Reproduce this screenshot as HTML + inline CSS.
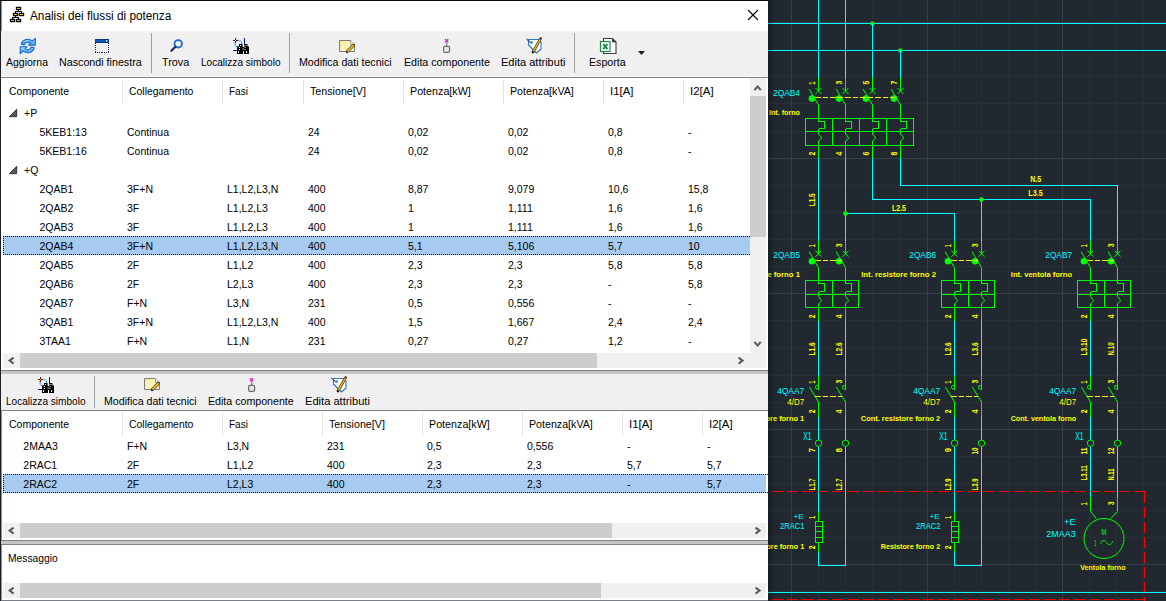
<!DOCTYPE html><html><head><meta charset="utf-8"><style>
html,body{margin:0;padding:0;}body{width:1166px;height:601px;overflow:hidden;position:relative;background:#212830;font-family:"Liberation Sans", sans-serif;}
.a{position:absolute;}
</style></head><body>
<svg class="a" style="left:0;top:0" width="1166" height="601" viewBox="0 0 1166 601" font-family="Liberation Sans, sans-serif"><rect x="818" y="0" width="1" height="601" fill="#282f38"/><rect x="845" y="0" width="1" height="601" fill="#282f38"/><rect x="872" y="0" width="1" height="601" fill="#282f38"/><rect x="900" y="0" width="1" height="601" fill="#282f38"/><rect x="954" y="0" width="1" height="601" fill="#282f38"/><rect x="981" y="0" width="1" height="601" fill="#282f38"/><rect x="1008" y="0" width="1" height="601" fill="#282f38"/><rect x="1035" y="0" width="1" height="601" fill="#282f38"/><rect x="1089" y="0" width="1" height="601" fill="#282f38"/><rect x="1116" y="0" width="1" height="601" fill="#282f38"/><rect x="1143" y="0" width="1" height="601" fill="#282f38"/><rect x="767" y="49" width="399" height="1" fill="#282f38"/><rect x="767" y="76" width="399" height="1" fill="#282f38"/><rect x="767" y="103" width="399" height="1" fill="#282f38"/><rect x="767" y="131" width="399" height="1" fill="#282f38"/><rect x="767" y="185" width="399" height="1" fill="#282f38"/><rect x="767" y="212" width="399" height="1" fill="#282f38"/><rect x="767" y="239" width="399" height="1" fill="#282f38"/><rect x="767" y="266" width="399" height="1" fill="#282f38"/><rect x="767" y="320" width="399" height="1" fill="#282f38"/><rect x="767" y="347" width="399" height="1" fill="#282f38"/><rect x="767" y="375" width="399" height="1" fill="#282f38"/><rect x="767" y="402" width="399" height="1" fill="#282f38"/><rect x="767" y="456" width="399" height="1" fill="#282f38"/><rect x="767" y="483" width="399" height="1" fill="#282f38"/><rect x="767" y="510" width="399" height="1" fill="#282f38"/><rect x="767" y="537" width="399" height="1" fill="#282f38"/><rect x="767" y="591" width="399" height="1" fill="#282f38"/><rect x="791" y="0" width="1" height="601" fill="#363d47"/><rect x="927" y="0" width="1" height="601" fill="#363d47"/><rect x="1062" y="0" width="1" height="601" fill="#363d47"/><rect x="767" y="22" width="399" height="1" fill="#363d47"/><rect x="767" y="158" width="399" height="1" fill="#363d47"/><rect x="767" y="293" width="399" height="1" fill="#363d47"/><rect x="767" y="429" width="399" height="1" fill="#363d47"/><rect x="767" y="564" width="399" height="1" fill="#363d47"/><rect x="767" y="23" width="399" height="1" fill="#00ffff" shape-rendering="crispEdges"/><rect x="767" y="50" width="399" height="1" fill="#00ffff" shape-rendering="crispEdges"/><rect x="870.6" y="21.6" width="3.8" height="3.8" fill="#00ff00"/><rect x="898.6" y="48.6" width="3.8" height="3.8" fill="#00ff00"/><rect x="818" y="0" width="1" height="78" fill="#00ffff" shape-rendering="crispEdges"/><rect x="845" y="0" width="1" height="78" fill="#00ffff" shape-rendering="crispEdges"/><rect x="872" y="23.5" width="1" height="54.5" fill="#00ffff" shape-rendering="crispEdges"/><rect x="900" y="50.5" width="1" height="27.5" fill="#00ffff" shape-rendering="crispEdges"/><rect x="818" y="78" width="1" height="13" fill="#00ff00" shape-rendering="crispEdges"/><line x1="815.5" y1="88" x2="821.5" y2="94" stroke="#00ff00" stroke-width="1" /><line x1="815.5" y1="94" x2="821.5" y2="88" stroke="#00ff00" stroke-width="1" /><line x1="809.0" y1="89" x2="818.5" y2="105" stroke="#00ff00" stroke-width="1" /><circle cx="812.0" cy="98.6" r="3.3" fill="#00ff00"/><rect x="818" y="105" width="1" height="16.5" fill="#00ff00" shape-rendering="crispEdges"/><polyline points="818.5,121.5 824.5,121.5 824.5,128.5 818.5,128.5" stroke="#00ff00" stroke-width="1" fill="none" shape-rendering="crispEdges"/><rect x="818" y="128.5" width="1" height="5.199999999999989" fill="#00ff00" shape-rendering="crispEdges"/><polyline points="818.5,133.7 821.7,138 818.5,141.3" stroke="#00ff00" stroke-width="1" fill="none" /><rect x="818" y="141.3" width="1" height="17.0" fill="#00ff00" shape-rendering="crispEdges"/><text x="0" y="0" transform="translate(814.9,84.6) rotate(-90)" fill="#ffff00" font-size="8.78" text-anchor="start" textLength="2.8" lengthAdjust="spacingAndGlyphs" font-weight="bold">1</text><text x="0" y="0" transform="translate(814.9,155.6) rotate(-90)" fill="#ffff00" font-size="8.78" text-anchor="start" textLength="3.8" lengthAdjust="spacingAndGlyphs" font-weight="bold">2</text><rect x="845" y="78" width="1" height="13" fill="#00ff00" shape-rendering="crispEdges"/><line x1="842.5" y1="88" x2="848.5" y2="94" stroke="#00ff00" stroke-width="1" /><line x1="842.5" y1="94" x2="848.5" y2="88" stroke="#00ff00" stroke-width="1" /><line x1="836.0" y1="89" x2="845.5" y2="105" stroke="#00ff00" stroke-width="1" /><circle cx="839.0" cy="98.6" r="3.3" fill="#00ff00"/><rect x="845" y="105" width="1" height="16.5" fill="#00ff00" shape-rendering="crispEdges"/><polyline points="845.5,121.5 851.5,121.5 851.5,128.5 845.5,128.5" stroke="#00ff00" stroke-width="1" fill="none" shape-rendering="crispEdges"/><rect x="845" y="128.5" width="1" height="5.199999999999989" fill="#00ff00" shape-rendering="crispEdges"/><polyline points="845.5,133.7 848.7,138 845.5,141.3" stroke="#00ff00" stroke-width="1" fill="none" /><rect x="845" y="141.3" width="1" height="17.0" fill="#00ff00" shape-rendering="crispEdges"/><text x="0" y="0" transform="translate(841.9,84.6) rotate(-90)" fill="#ffff00" font-size="8.78" text-anchor="start" textLength="3.8" lengthAdjust="spacingAndGlyphs" font-weight="bold">3</text><text x="0" y="0" transform="translate(841.9,155.6) rotate(-90)" fill="#ffff00" font-size="8.78" text-anchor="start" textLength="3.8" lengthAdjust="spacingAndGlyphs" font-weight="bold">4</text><rect x="872" y="78" width="1" height="13" fill="#00ff00" shape-rendering="crispEdges"/><line x1="869.5" y1="88" x2="875.5" y2="94" stroke="#00ff00" stroke-width="1" /><line x1="869.5" y1="94" x2="875.5" y2="88" stroke="#00ff00" stroke-width="1" /><line x1="863.0" y1="89" x2="872.5" y2="105" stroke="#00ff00" stroke-width="1" /><circle cx="866.0" cy="98.6" r="3.3" fill="#00ff00"/><rect x="872" y="105" width="1" height="16.5" fill="#00ff00" shape-rendering="crispEdges"/><polyline points="872.5,121.5 878.5,121.5 878.5,128.5 872.5,128.5" stroke="#00ff00" stroke-width="1" fill="none" shape-rendering="crispEdges"/><rect x="872" y="128.5" width="1" height="5.199999999999989" fill="#00ff00" shape-rendering="crispEdges"/><polyline points="872.5,133.7 875.7,138 872.5,141.3" stroke="#00ff00" stroke-width="1" fill="none" /><rect x="872" y="141.3" width="1" height="17.0" fill="#00ff00" shape-rendering="crispEdges"/><text x="0" y="0" transform="translate(868.9,84.6) rotate(-90)" fill="#ffff00" font-size="8.78" text-anchor="start" textLength="3.8" lengthAdjust="spacingAndGlyphs" font-weight="bold">5</text><text x="0" y="0" transform="translate(868.9,155.6) rotate(-90)" fill="#ffff00" font-size="8.78" text-anchor="start" textLength="3.8" lengthAdjust="spacingAndGlyphs" font-weight="bold">6</text><rect x="900" y="78" width="1" height="13" fill="#00ff00" shape-rendering="crispEdges"/><line x1="897.5" y1="88" x2="903.5" y2="94" stroke="#00ff00" stroke-width="1" /><line x1="897.5" y1="94" x2="903.5" y2="88" stroke="#00ff00" stroke-width="1" /><line x1="891.0" y1="89" x2="900.5" y2="105" stroke="#00ff00" stroke-width="1" /><circle cx="894.0" cy="98.6" r="3.3" fill="#00ff00"/><rect x="900" y="105" width="1" height="16.5" fill="#00ff00" shape-rendering="crispEdges"/><polyline points="900.5,121.5 906.5,121.5 906.5,128.5 900.5,128.5" stroke="#00ff00" stroke-width="1" fill="none" shape-rendering="crispEdges"/><rect x="900" y="128.5" width="1" height="5.199999999999989" fill="#00ff00" shape-rendering="crispEdges"/><polyline points="900.5,133.7 903.7,138 900.5,141.3" stroke="#00ff00" stroke-width="1" fill="none" /><rect x="900" y="141.3" width="1" height="17.0" fill="#00ff00" shape-rendering="crispEdges"/><text x="0" y="0" transform="translate(896.9,84.6) rotate(-90)" fill="#ffff00" font-size="8.78" text-anchor="start" textLength="3.8" lengthAdjust="spacingAndGlyphs" font-weight="bold">7</text><text x="0" y="0" transform="translate(896.9,155.6) rotate(-90)" fill="#ffff00" font-size="8.78" text-anchor="start" textLength="3.8" lengthAdjust="spacingAndGlyphs" font-weight="bold">8</text><line x1="815.0" y1="97.5" x2="897.0" y2="97.5" stroke="#ffff00" stroke-width="1" stroke-dasharray="5.5,2" shape-rendering="crispEdges"/><rect x="805.5" y="118.5" width="108.0" height="27.0" fill="none" stroke="#00ff00" stroke-width="1" shape-rendering="crispEdges"/><rect x="805.5" y="131" width="108.0" height="1" fill="#00ff00" shape-rendering="crispEdges"/><rect x="832" y="118.5" width="1" height="27.0" fill="#00ff00" shape-rendering="crispEdges"/><rect x="859" y="118.5" width="1" height="27.0" fill="#00ff00" shape-rendering="crispEdges"/><rect x="886" y="118.5" width="1" height="27.0" fill="#00ff00" shape-rendering="crispEdges"/><text x="0" y="0" transform="translate(800,95.5)" fill="#00ffff" font-size="9.60" text-anchor="end" textLength="27" lengthAdjust="spacingAndGlyphs">2QAB4</text><text x="0" y="0" transform="translate(800,114.5)" fill="#ffff00" font-size="7.13" text-anchor="end" textLength="31" lengthAdjust="spacingAndGlyphs" font-weight="bold">Int. forno</text><rect x="818" y="158.3" width="1" height="82.39999999999998" fill="#00ffff" shape-rendering="crispEdges"/><rect x="845" y="158.3" width="1" height="82.39999999999998" fill="#00ffff" shape-rendering="crispEdges"/><polyline points="872.5,158.3 872.5,199.5 1090.5,199.5 1090.5,240.7" stroke="#00ffff" stroke-width="1" fill="none" shape-rendering="crispEdges"/><polyline points="900.5,158.3 900.5,185.5 1117.5,185.5 1117.5,240.7" stroke="#00ffff" stroke-width="1" fill="none" shape-rendering="crispEdges"/><polyline points="845.5,213.5 954.5,213.5 954.5,240.7" stroke="#00ffff" stroke-width="1" fill="none" shape-rendering="crispEdges"/><rect x="981" y="199.5" width="1" height="41.19999999999999" fill="#00ffff" shape-rendering="crispEdges"/><circle cx="845.5" cy="213.5" r="2.3" fill="#00ff00"/><circle cx="981.5" cy="199.5" r="2.3" fill="#00ff00"/><text x="0" y="0" transform="translate(815,206.3) rotate(-90)" fill="#ffff00" font-size="8.92" text-anchor="start" textLength="13" lengthAdjust="spacingAndGlyphs" font-weight="bold">L1.5</text><text x="0" y="0" transform="translate(892,210.5)" fill="#ffff00" font-size="8.64" text-anchor="start" textLength="14" lengthAdjust="spacingAndGlyphs" font-weight="bold">L2.5</text><text x="0" y="0" transform="translate(1030.3,182.3)" fill="#ffff00" font-size="8.64" text-anchor="start" textLength="11" lengthAdjust="spacingAndGlyphs" font-weight="bold">N.5</text><text x="0" y="0" transform="translate(1028.3,196.3)" fill="#ffff00" font-size="8.92" text-anchor="start" textLength="14.4" lengthAdjust="spacingAndGlyphs" font-weight="bold">L3.5</text><rect x="818" y="240.7" width="1" height="13.0" fill="#00ff00" shape-rendering="crispEdges"/><line x1="815.5" y1="250.7" x2="821.5" y2="256.7" stroke="#00ff00" stroke-width="1" /><line x1="815.5" y1="256.7" x2="821.5" y2="250.7" stroke="#00ff00" stroke-width="1" /><line x1="809.0" y1="251.7" x2="818.5" y2="267.7" stroke="#00ff00" stroke-width="1" /><circle cx="812.0" cy="261.3" r="3.3" fill="#00ff00"/><rect x="818" y="267.7" width="1" height="16.5" fill="#00ff00" shape-rendering="crispEdges"/><polyline points="818.5,283.5 824.5,283.5 824.5,291.5 818.5,291.5" stroke="#00ff00" stroke-width="1" fill="none" shape-rendering="crispEdges"/><rect x="818" y="291.5" width="1" height="4.899999999999977" fill="#00ff00" shape-rendering="crispEdges"/><polyline points="818.5,296.4 821.7,300.7 818.5,304.0" stroke="#00ff00" stroke-width="1" fill="none" /><rect x="818" y="304.0" width="1" height="17.0" fill="#00ff00" shape-rendering="crispEdges"/><text x="0" y="0" transform="translate(814.9,247.29999999999998) rotate(-90)" fill="#ffff00" font-size="8.78" text-anchor="start" textLength="2.8" lengthAdjust="spacingAndGlyphs" font-weight="bold">1</text><text x="0" y="0" transform="translate(814.9,318.29999999999995) rotate(-90)" fill="#ffff00" font-size="8.78" text-anchor="start" textLength="3.8" lengthAdjust="spacingAndGlyphs" font-weight="bold">2</text><rect x="845" y="240.7" width="1" height="13.0" fill="#00ff00" shape-rendering="crispEdges"/><line x1="842.5" y1="250.7" x2="848.5" y2="256.7" stroke="#00ff00" stroke-width="1" /><line x1="842.5" y1="256.7" x2="848.5" y2="250.7" stroke="#00ff00" stroke-width="1" /><line x1="836.0" y1="251.7" x2="845.5" y2="267.7" stroke="#00ff00" stroke-width="1" /><circle cx="839.0" cy="261.3" r="3.3" fill="#00ff00"/><rect x="845" y="267.7" width="1" height="16.5" fill="#00ff00" shape-rendering="crispEdges"/><polyline points="845.5,283.5 851.5,283.5 851.5,291.5 845.5,291.5" stroke="#00ff00" stroke-width="1" fill="none" shape-rendering="crispEdges"/><rect x="845" y="291.5" width="1" height="4.899999999999977" fill="#00ff00" shape-rendering="crispEdges"/><polyline points="845.5,296.4 848.7,300.7 845.5,304.0" stroke="#00ff00" stroke-width="1" fill="none" /><rect x="845" y="304.0" width="1" height="17.0" fill="#00ff00" shape-rendering="crispEdges"/><text x="0" y="0" transform="translate(841.9,247.29999999999998) rotate(-90)" fill="#ffff00" font-size="8.78" text-anchor="start" textLength="3.8" lengthAdjust="spacingAndGlyphs" font-weight="bold">3</text><text x="0" y="0" transform="translate(841.9,318.29999999999995) rotate(-90)" fill="#ffff00" font-size="8.78" text-anchor="start" textLength="3.8" lengthAdjust="spacingAndGlyphs" font-weight="bold">4</text><line x1="815.0" y1="260.5" x2="842.0" y2="260.5" stroke="#ffff00" stroke-width="1" stroke-dasharray="5.5,2" shape-rendering="crispEdges"/><rect x="805.5" y="280.5" width="53.0" height="27.0" fill="none" stroke="#00ff00" stroke-width="1" shape-rendering="crispEdges"/><rect x="805.5" y="294" width="53.0" height="1" fill="#00ff00" shape-rendering="crispEdges"/><rect x="832" y="280.5" width="1" height="27.0" fill="#00ff00" shape-rendering="crispEdges"/><text x="0" y="0" transform="translate(800.0,258.3)" fill="#00ffff" font-size="9.60" text-anchor="end" textLength="26.7" lengthAdjust="spacingAndGlyphs">2QAB5</text><text x="0" y="0" transform="translate(800.0,277.3)" fill="#ffff00" font-size="7.13" text-anchor="end" textLength="74.8" lengthAdjust="spacingAndGlyphs" font-weight="bold">Int. resistore forno 1</text><rect x="818" y="321.0" width="1" height="54.69999999999999" fill="#00ffff" shape-rendering="crispEdges"/><text x="0" y="0" transform="translate(815.0,355.5) rotate(-90)" fill="#ffff00" font-size="8.92" text-anchor="start" textLength="13.3" lengthAdjust="spacingAndGlyphs" font-weight="bold">L1.6</text><rect x="818" y="375.7" width="1" height="14.300000000000011" fill="#00ff00" shape-rendering="crispEdges"/><path d="M818.5 385.5 H817.2 A1.8 1.8 0 0 0 817.2 389.1 H818.5" stroke="#00ff00" fill="none" stroke-width="1"/><line x1="809.3" y1="387" x2="818.5" y2="402" stroke="#00ff00" stroke-width="1" /><rect x="818" y="402" width="1" height="15.399999999999977" fill="#00ff00" shape-rendering="crispEdges"/><text x="0" y="0" transform="translate(814.9,383.4) rotate(-90)" fill="#ffff00" font-size="8.78" text-anchor="start" textLength="2.8" lengthAdjust="spacingAndGlyphs" font-weight="bold">1</text><text x="0" y="0" transform="translate(814.9,413.3) rotate(-90)" fill="#ffff00" font-size="8.78" text-anchor="start" textLength="3.8" lengthAdjust="spacingAndGlyphs" font-weight="bold">2</text><rect x="818" y="417.4" width="1" height="22.600000000000023" fill="#00ffff" shape-rendering="crispEdges"/><circle cx="818.5" cy="443.2" r="3.2" fill="none" stroke="#00ff00" stroke-width="1"/><text x="0" y="0" transform="translate(814.9,452.2) rotate(-90)" fill="#ffff00" font-size="8.78" text-anchor="start" textLength="4.2" lengthAdjust="spacingAndGlyphs" font-weight="bold">7</text><rect x="845" y="321.0" width="1" height="54.69999999999999" fill="#00ffff" shape-rendering="crispEdges"/><text x="0" y="0" transform="translate(842.0,355.5) rotate(-90)" fill="#ffff00" font-size="8.92" text-anchor="start" textLength="13.3" lengthAdjust="spacingAndGlyphs" font-weight="bold">L2.6</text><rect x="845" y="375.7" width="1" height="14.300000000000011" fill="#00ff00" shape-rendering="crispEdges"/><path d="M845.5 385.5 H844.2 A1.8 1.8 0 0 0 844.2 389.1 H845.5" stroke="#00ff00" fill="none" stroke-width="1"/><line x1="836.3" y1="387" x2="845.5" y2="402" stroke="#00ff00" stroke-width="1" /><rect x="845" y="402" width="1" height="15.399999999999977" fill="#00ff00" shape-rendering="crispEdges"/><text x="0" y="0" transform="translate(841.9,383.4) rotate(-90)" fill="#ffff00" font-size="8.78" text-anchor="start" textLength="3.8" lengthAdjust="spacingAndGlyphs" font-weight="bold">3</text><text x="0" y="0" transform="translate(841.9,413.3) rotate(-90)" fill="#ffff00" font-size="8.78" text-anchor="start" textLength="3.8" lengthAdjust="spacingAndGlyphs" font-weight="bold">4</text><rect x="845" y="417.4" width="1" height="22.600000000000023" fill="#00ffff" shape-rendering="crispEdges"/><circle cx="845.5" cy="443.2" r="3.2" fill="none" stroke="#00ff00" stroke-width="1"/><text x="0" y="0" transform="translate(841.9,452.2) rotate(-90)" fill="#ffff00" font-size="8.78" text-anchor="start" textLength="4.2" lengthAdjust="spacingAndGlyphs" font-weight="bold">8</text><line x1="815.0" y1="396.5" x2="842.0" y2="396.5" stroke="#ffff00" stroke-width="1" stroke-dasharray="5.5,2" shape-rendering="crispEdges"/><text x="0" y="0" transform="translate(804.2,393.8)" fill="#00ffff" font-size="9.05" text-anchor="end" textLength="27" lengthAdjust="spacingAndGlyphs">4QAA7</text><text x="0" y="0" transform="translate(804.2,405.3)" fill="#ffff00" font-size="9.33" text-anchor="end" textLength="17" lengthAdjust="spacingAndGlyphs">4/D7</text><text x="0" y="0" transform="translate(804.2,421.2)" fill="#ffff00" font-size="7.13" text-anchor="end" textLength="79.35000000000001" lengthAdjust="spacingAndGlyphs" font-weight="bold">Cont. resistore forno 1</text><text x="0" y="0" transform="translate(811.5,439.8)" fill="#00ffff" font-size="10.43" text-anchor="end" textLength="8.3" lengthAdjust="spacingAndGlyphs">X1</text><rect x="954" y="240.7" width="1" height="13.0" fill="#00ff00" shape-rendering="crispEdges"/><line x1="951.5" y1="250.7" x2="957.5" y2="256.7" stroke="#00ff00" stroke-width="1" /><line x1="951.5" y1="256.7" x2="957.5" y2="250.7" stroke="#00ff00" stroke-width="1" /><line x1="945.0" y1="251.7" x2="954.5" y2="267.7" stroke="#00ff00" stroke-width="1" /><circle cx="948.0" cy="261.3" r="3.3" fill="#00ff00"/><rect x="954" y="267.7" width="1" height="16.5" fill="#00ff00" shape-rendering="crispEdges"/><polyline points="954.5,283.5 960.5,283.5 960.5,291.5 954.5,291.5" stroke="#00ff00" stroke-width="1" fill="none" shape-rendering="crispEdges"/><rect x="954" y="291.5" width="1" height="4.899999999999977" fill="#00ff00" shape-rendering="crispEdges"/><polyline points="954.5,296.4 957.7,300.7 954.5,304.0" stroke="#00ff00" stroke-width="1" fill="none" /><rect x="954" y="304.0" width="1" height="17.0" fill="#00ff00" shape-rendering="crispEdges"/><text x="0" y="0" transform="translate(950.9,247.29999999999998) rotate(-90)" fill="#ffff00" font-size="8.78" text-anchor="start" textLength="2.8" lengthAdjust="spacingAndGlyphs" font-weight="bold">1</text><text x="0" y="0" transform="translate(950.9,318.29999999999995) rotate(-90)" fill="#ffff00" font-size="8.78" text-anchor="start" textLength="3.8" lengthAdjust="spacingAndGlyphs" font-weight="bold">2</text><rect x="981" y="240.7" width="1" height="13.0" fill="#00ff00" shape-rendering="crispEdges"/><line x1="978.5" y1="250.7" x2="984.5" y2="256.7" stroke="#00ff00" stroke-width="1" /><line x1="978.5" y1="256.7" x2="984.5" y2="250.7" stroke="#00ff00" stroke-width="1" /><line x1="972.0" y1="251.7" x2="981.5" y2="267.7" stroke="#00ff00" stroke-width="1" /><circle cx="975.0" cy="261.3" r="3.3" fill="#00ff00"/><rect x="981" y="267.7" width="1" height="16.5" fill="#00ff00" shape-rendering="crispEdges"/><polyline points="981.5,283.5 987.5,283.5 987.5,291.5 981.5,291.5" stroke="#00ff00" stroke-width="1" fill="none" shape-rendering="crispEdges"/><rect x="981" y="291.5" width="1" height="4.899999999999977" fill="#00ff00" shape-rendering="crispEdges"/><polyline points="981.5,296.4 984.7,300.7 981.5,304.0" stroke="#00ff00" stroke-width="1" fill="none" /><rect x="981" y="304.0" width="1" height="17.0" fill="#00ff00" shape-rendering="crispEdges"/><text x="0" y="0" transform="translate(977.9,247.29999999999998) rotate(-90)" fill="#ffff00" font-size="8.78" text-anchor="start" textLength="3.8" lengthAdjust="spacingAndGlyphs" font-weight="bold">3</text><text x="0" y="0" transform="translate(977.9,318.29999999999995) rotate(-90)" fill="#ffff00" font-size="8.78" text-anchor="start" textLength="3.8" lengthAdjust="spacingAndGlyphs" font-weight="bold">4</text><line x1="951.0" y1="260.5" x2="978.0" y2="260.5" stroke="#ffff00" stroke-width="1" stroke-dasharray="5.5,2" shape-rendering="crispEdges"/><rect x="941.5" y="280.5" width="53.0" height="27.0" fill="none" stroke="#00ff00" stroke-width="1" shape-rendering="crispEdges"/><rect x="941.5" y="294" width="53.0" height="1" fill="#00ff00" shape-rendering="crispEdges"/><rect x="968" y="280.5" width="1" height="27.0" fill="#00ff00" shape-rendering="crispEdges"/><text x="0" y="0" transform="translate(936.0,258.3)" fill="#00ffff" font-size="9.60" text-anchor="end" textLength="26.7" lengthAdjust="spacingAndGlyphs">2QAB6</text><text x="0" y="0" transform="translate(936.0,277.3)" fill="#ffff00" font-size="7.13" text-anchor="end" textLength="74.8" lengthAdjust="spacingAndGlyphs" font-weight="bold">Int. resistore forno 2</text><rect x="954" y="321.0" width="1" height="54.69999999999999" fill="#00ffff" shape-rendering="crispEdges"/><text x="0" y="0" transform="translate(951.0,355.5) rotate(-90)" fill="#ffff00" font-size="8.92" text-anchor="start" textLength="13.3" lengthAdjust="spacingAndGlyphs" font-weight="bold">L2.6</text><rect x="954" y="375.7" width="1" height="14.300000000000011" fill="#00ff00" shape-rendering="crispEdges"/><path d="M954.5 385.5 H953.2 A1.8 1.8 0 0 0 953.2 389.1 H954.5" stroke="#00ff00" fill="none" stroke-width="1"/><line x1="945.3" y1="387" x2="954.5" y2="402" stroke="#00ff00" stroke-width="1" /><rect x="954" y="402" width="1" height="15.399999999999977" fill="#00ff00" shape-rendering="crispEdges"/><text x="0" y="0" transform="translate(950.9,383.4) rotate(-90)" fill="#ffff00" font-size="8.78" text-anchor="start" textLength="2.8" lengthAdjust="spacingAndGlyphs" font-weight="bold">1</text><text x="0" y="0" transform="translate(950.9,413.3) rotate(-90)" fill="#ffff00" font-size="8.78" text-anchor="start" textLength="3.8" lengthAdjust="spacingAndGlyphs" font-weight="bold">2</text><rect x="954" y="417.4" width="1" height="22.600000000000023" fill="#00ffff" shape-rendering="crispEdges"/><circle cx="954.5" cy="443.2" r="3.2" fill="none" stroke="#00ff00" stroke-width="1"/><text x="0" y="0" transform="translate(950.9,452.2) rotate(-90)" fill="#ffff00" font-size="8.78" text-anchor="start" textLength="4.2" lengthAdjust="spacingAndGlyphs" font-weight="bold">9</text><rect x="981" y="321.0" width="1" height="54.69999999999999" fill="#00ffff" shape-rendering="crispEdges"/><text x="0" y="0" transform="translate(978.0,355.5) rotate(-90)" fill="#ffff00" font-size="8.92" text-anchor="start" textLength="13.3" lengthAdjust="spacingAndGlyphs" font-weight="bold">L3.6</text><rect x="981" y="375.7" width="1" height="14.300000000000011" fill="#00ff00" shape-rendering="crispEdges"/><path d="M981.5 385.5 H980.2 A1.8 1.8 0 0 0 980.2 389.1 H981.5" stroke="#00ff00" fill="none" stroke-width="1"/><line x1="972.3" y1="387" x2="981.5" y2="402" stroke="#00ff00" stroke-width="1" /><rect x="981" y="402" width="1" height="15.399999999999977" fill="#00ff00" shape-rendering="crispEdges"/><text x="0" y="0" transform="translate(977.9,383.4) rotate(-90)" fill="#ffff00" font-size="8.78" text-anchor="start" textLength="3.8" lengthAdjust="spacingAndGlyphs" font-weight="bold">3</text><text x="0" y="0" transform="translate(977.9,413.3) rotate(-90)" fill="#ffff00" font-size="8.78" text-anchor="start" textLength="3.8" lengthAdjust="spacingAndGlyphs" font-weight="bold">4</text><rect x="981" y="417.4" width="1" height="22.600000000000023" fill="#00ffff" shape-rendering="crispEdges"/><circle cx="981.5" cy="443.2" r="3.2" fill="none" stroke="#00ff00" stroke-width="1"/><text x="0" y="0" transform="translate(977.9,454.6) rotate(-90)" fill="#ffff00" font-size="8.78" text-anchor="start" textLength="7" lengthAdjust="spacingAndGlyphs" font-weight="bold">10</text><line x1="951.0" y1="396.5" x2="978.0" y2="396.5" stroke="#ffff00" stroke-width="1" stroke-dasharray="5.5,2" shape-rendering="crispEdges"/><text x="0" y="0" transform="translate(940.2,393.8)" fill="#00ffff" font-size="9.05" text-anchor="end" textLength="27" lengthAdjust="spacingAndGlyphs">4QAA7</text><text x="0" y="0" transform="translate(940.2,405.3)" fill="#ffff00" font-size="9.33" text-anchor="end" textLength="17" lengthAdjust="spacingAndGlyphs">4/D7</text><text x="0" y="0" transform="translate(940.2,421.2)" fill="#ffff00" font-size="7.13" text-anchor="end" textLength="79.35000000000001" lengthAdjust="spacingAndGlyphs" font-weight="bold">Cont. resistore forno 2</text><text x="0" y="0" transform="translate(947.5,439.8)" fill="#00ffff" font-size="10.43" text-anchor="end" textLength="8.3" lengthAdjust="spacingAndGlyphs">X1</text><rect x="1090" y="240.7" width="1" height="13.0" fill="#00ff00" shape-rendering="crispEdges"/><line x1="1087.5" y1="250.7" x2="1093.5" y2="256.7" stroke="#00ff00" stroke-width="1" /><line x1="1087.5" y1="256.7" x2="1093.5" y2="250.7" stroke="#00ff00" stroke-width="1" /><line x1="1081.0" y1="251.7" x2="1090.5" y2="267.7" stroke="#00ff00" stroke-width="1" /><circle cx="1084.0" cy="261.3" r="3.3" fill="#00ff00"/><rect x="1090" y="267.7" width="1" height="16.5" fill="#00ff00" shape-rendering="crispEdges"/><polyline points="1090.5,283.5 1096.5,283.5 1096.5,291.5 1090.5,291.5" stroke="#00ff00" stroke-width="1" fill="none" shape-rendering="crispEdges"/><rect x="1090" y="291.5" width="1" height="4.899999999999977" fill="#00ff00" shape-rendering="crispEdges"/><polyline points="1090.5,296.4 1093.7,300.7 1090.5,304.0" stroke="#00ff00" stroke-width="1" fill="none" /><rect x="1090" y="304.0" width="1" height="17.0" fill="#00ff00" shape-rendering="crispEdges"/><text x="0" y="0" transform="translate(1086.9,247.29999999999998) rotate(-90)" fill="#ffff00" font-size="8.78" text-anchor="start" textLength="2.8" lengthAdjust="spacingAndGlyphs" font-weight="bold">1</text><text x="0" y="0" transform="translate(1086.9,318.29999999999995) rotate(-90)" fill="#ffff00" font-size="8.78" text-anchor="start" textLength="3.8" lengthAdjust="spacingAndGlyphs" font-weight="bold">2</text><rect x="1117" y="240.7" width="1" height="13.0" fill="#00ff00" shape-rendering="crispEdges"/><line x1="1114.5" y1="250.7" x2="1120.5" y2="256.7" stroke="#00ff00" stroke-width="1" /><line x1="1114.5" y1="256.7" x2="1120.5" y2="250.7" stroke="#00ff00" stroke-width="1" /><line x1="1108.0" y1="251.7" x2="1117.5" y2="267.7" stroke="#00ff00" stroke-width="1" /><circle cx="1111.0" cy="261.3" r="3.3" fill="#00ff00"/><rect x="1117" y="267.7" width="1" height="16.5" fill="#00ff00" shape-rendering="crispEdges"/><polyline points="1117.5,283.5 1123.5,283.5 1123.5,291.5 1117.5,291.5" stroke="#00ff00" stroke-width="1" fill="none" shape-rendering="crispEdges"/><rect x="1117" y="291.5" width="1" height="4.899999999999977" fill="#00ff00" shape-rendering="crispEdges"/><polyline points="1117.5,296.4 1120.7,300.7 1117.5,304.0" stroke="#00ff00" stroke-width="1" fill="none" /><rect x="1117" y="304.0" width="1" height="17.0" fill="#00ff00" shape-rendering="crispEdges"/><text x="0" y="0" transform="translate(1113.9,247.29999999999998) rotate(-90)" fill="#ffff00" font-size="8.78" text-anchor="start" textLength="3.8" lengthAdjust="spacingAndGlyphs" font-weight="bold">3</text><text x="0" y="0" transform="translate(1113.9,318.29999999999995) rotate(-90)" fill="#ffff00" font-size="8.78" text-anchor="start" textLength="3.8" lengthAdjust="spacingAndGlyphs" font-weight="bold">4</text><line x1="1087.0" y1="260.5" x2="1114.0" y2="260.5" stroke="#ffff00" stroke-width="1" stroke-dasharray="5.5,2" shape-rendering="crispEdges"/><rect x="1077.5" y="280.5" width="53.0" height="27.0" fill="none" stroke="#00ff00" stroke-width="1" shape-rendering="crispEdges"/><rect x="1077.5" y="294" width="53.0" height="1" fill="#00ff00" shape-rendering="crispEdges"/><rect x="1104" y="280.5" width="1" height="27.0" fill="#00ff00" shape-rendering="crispEdges"/><text x="0" y="0" transform="translate(1072.0,258.3)" fill="#00ffff" font-size="9.60" text-anchor="end" textLength="26.7" lengthAdjust="spacingAndGlyphs">2QAB7</text><text x="0" y="0" transform="translate(1072.0,277.3)" fill="#ffff00" font-size="7.13" text-anchor="end" textLength="61.199999999999996" lengthAdjust="spacingAndGlyphs" font-weight="bold">Int. ventola forno</text><rect x="1090" y="321.0" width="1" height="54.69999999999999" fill="#00ffff" shape-rendering="crispEdges"/><text x="0" y="0" transform="translate(1087.0,355.5) rotate(-90)" fill="#ffff00" font-size="8.92" text-anchor="start" textLength="17" lengthAdjust="spacingAndGlyphs" font-weight="bold">L3.10</text><rect x="1090" y="375.7" width="1" height="14.300000000000011" fill="#00ff00" shape-rendering="crispEdges"/><path d="M1090.5 385.5 H1089.2 A1.8 1.8 0 0 0 1089.2 389.1 H1090.5" stroke="#00ff00" fill="none" stroke-width="1"/><line x1="1081.3" y1="387" x2="1090.5" y2="402" stroke="#00ff00" stroke-width="1" /><rect x="1090" y="402" width="1" height="15.399999999999977" fill="#00ff00" shape-rendering="crispEdges"/><text x="0" y="0" transform="translate(1086.9,383.4) rotate(-90)" fill="#ffff00" font-size="8.78" text-anchor="start" textLength="2.8" lengthAdjust="spacingAndGlyphs" font-weight="bold">1</text><text x="0" y="0" transform="translate(1086.9,413.3) rotate(-90)" fill="#ffff00" font-size="8.78" text-anchor="start" textLength="3.8" lengthAdjust="spacingAndGlyphs" font-weight="bold">2</text><rect x="1090" y="417.4" width="1" height="22.600000000000023" fill="#00ffff" shape-rendering="crispEdges"/><circle cx="1090.5" cy="443.2" r="3.2" fill="none" stroke="#00ff00" stroke-width="1"/><text x="0" y="0" transform="translate(1086.9,454.6) rotate(-90)" fill="#ffff00" font-size="8.78" text-anchor="start" textLength="7" lengthAdjust="spacingAndGlyphs" font-weight="bold">11</text><rect x="1117" y="321.0" width="1" height="54.69999999999999" fill="#00ffff" shape-rendering="crispEdges"/><text x="0" y="0" transform="translate(1114.0,355.5) rotate(-90)" fill="#ffff00" font-size="8.92" text-anchor="start" textLength="13.3" lengthAdjust="spacingAndGlyphs" font-weight="bold">N.10</text><rect x="1117" y="375.7" width="1" height="14.300000000000011" fill="#00ff00" shape-rendering="crispEdges"/><path d="M1117.5 385.5 H1116.2 A1.8 1.8 0 0 0 1116.2 389.1 H1117.5" stroke="#00ff00" fill="none" stroke-width="1"/><line x1="1108.3" y1="387" x2="1117.5" y2="402" stroke="#00ff00" stroke-width="1" /><rect x="1117" y="402" width="1" height="15.399999999999977" fill="#00ff00" shape-rendering="crispEdges"/><text x="0" y="0" transform="translate(1113.9,383.4) rotate(-90)" fill="#ffff00" font-size="8.78" text-anchor="start" textLength="3.8" lengthAdjust="spacingAndGlyphs" font-weight="bold">3</text><text x="0" y="0" transform="translate(1113.9,413.3) rotate(-90)" fill="#ffff00" font-size="8.78" text-anchor="start" textLength="3.8" lengthAdjust="spacingAndGlyphs" font-weight="bold">4</text><rect x="1117" y="417.4" width="1" height="22.600000000000023" fill="#00ffff" shape-rendering="crispEdges"/><circle cx="1117.5" cy="443.2" r="3.2" fill="none" stroke="#00ff00" stroke-width="1"/><text x="0" y="0" transform="translate(1113.9,454.6) rotate(-90)" fill="#ffff00" font-size="8.78" text-anchor="start" textLength="7" lengthAdjust="spacingAndGlyphs" font-weight="bold">12</text><line x1="1087.0" y1="396.5" x2="1114.0" y2="396.5" stroke="#ffff00" stroke-width="1" stroke-dasharray="5.5,2" shape-rendering="crispEdges"/><text x="0" y="0" transform="translate(1076.2,393.8)" fill="#00ffff" font-size="9.05" text-anchor="end" textLength="27" lengthAdjust="spacingAndGlyphs">4QAA7</text><text x="0" y="0" transform="translate(1076.2,405.3)" fill="#ffff00" font-size="9.33" text-anchor="end" textLength="17" lengthAdjust="spacingAndGlyphs">4/D7</text><text x="0" y="0" transform="translate(1076.2,421.2)" fill="#ffff00" font-size="7.13" text-anchor="end" textLength="65.55" lengthAdjust="spacingAndGlyphs" font-weight="bold">Cont. ventola forno</text><text x="0" y="0" transform="translate(1083.5,439.8)" fill="#00ffff" font-size="10.43" text-anchor="end" textLength="8.3" lengthAdjust="spacingAndGlyphs">X1</text><rect x="818" y="446.5" width="1" height="65.70000000000005" fill="#00ffff" shape-rendering="crispEdges"/><rect x="845" y="446.5" width="1" height="119.0" fill="#00ffff" shape-rendering="crispEdges"/><rect x="818" y="512.2" width="1" height="9.299999999999955" fill="#00ff00" shape-rendering="crispEdges"/><rect x="815.0" y="521.5" width="7" height="21" fill="none" stroke="#00ff00" stroke-width="1" shape-rendering="crispEdges"/><rect x="815.0" y="526" width="7.0" height="1" fill="#00ff00" shape-rendering="crispEdges"/><rect x="815.0" y="531" width="7.0" height="1" fill="#00ff00" shape-rendering="crispEdges"/><rect x="815.0" y="537" width="7.0" height="1" fill="#00ff00" shape-rendering="crispEdges"/><rect x="818" y="542.5" width="1" height="9.100000000000023" fill="#00ff00" shape-rendering="crispEdges"/><polyline points="818.5,551.6 818.5,565.5 846.0,565.5" stroke="#00ffff" stroke-width="1" fill="none" shape-rendering="crispEdges"/><text x="0" y="0" transform="translate(804.0,518.7)" fill="#00ffff" font-size="7.96" text-anchor="end" textLength="10.6" lengthAdjust="spacingAndGlyphs">+E</text><text x="0" y="0" transform="translate(804.5,529.4)" fill="#00ffff" font-size="9.47" text-anchor="end" textLength="24.4" lengthAdjust="spacingAndGlyphs">2RAC1</text><text x="0" y="0" transform="translate(804.2,549)" fill="#ffff00" font-size="7.54" text-anchor="end" textLength="59.5" lengthAdjust="spacingAndGlyphs" font-weight="bold">Resistore forno 1</text><text x="0" y="0" transform="translate(814.9,518.8) rotate(-90)" fill="#ffff00" font-size="8.78" text-anchor="start" textLength="2.8" lengthAdjust="spacingAndGlyphs" font-weight="bold">1</text><text x="0" y="0" transform="translate(814.9,549.2) rotate(-90)" fill="#ffff00" font-size="8.78" text-anchor="start" textLength="3.8" lengthAdjust="spacingAndGlyphs" font-weight="bold">2</text><rect x="954" y="446.5" width="1" height="65.70000000000005" fill="#00ffff" shape-rendering="crispEdges"/><rect x="981" y="446.5" width="1" height="119.0" fill="#00ffff" shape-rendering="crispEdges"/><rect x="954" y="512.2" width="1" height="9.299999999999955" fill="#00ff00" shape-rendering="crispEdges"/><rect x="951.0" y="521.5" width="7" height="21" fill="none" stroke="#00ff00" stroke-width="1" shape-rendering="crispEdges"/><rect x="951.0" y="526" width="7.0" height="1" fill="#00ff00" shape-rendering="crispEdges"/><rect x="951.0" y="531" width="7.0" height="1" fill="#00ff00" shape-rendering="crispEdges"/><rect x="951.0" y="537" width="7.0" height="1" fill="#00ff00" shape-rendering="crispEdges"/><rect x="954" y="542.5" width="1" height="9.100000000000023" fill="#00ff00" shape-rendering="crispEdges"/><polyline points="954.5,551.6 954.5,565.5 982.0,565.5" stroke="#00ffff" stroke-width="1" fill="none" shape-rendering="crispEdges"/><text x="0" y="0" transform="translate(940.0,518.7)" fill="#00ffff" font-size="7.96" text-anchor="end" textLength="10.6" lengthAdjust="spacingAndGlyphs">+E</text><text x="0" y="0" transform="translate(940.5,529.4)" fill="#00ffff" font-size="9.47" text-anchor="end" textLength="24.4" lengthAdjust="spacingAndGlyphs">2RAC2</text><text x="0" y="0" transform="translate(940.2,549)" fill="#ffff00" font-size="7.54" text-anchor="end" textLength="59.5" lengthAdjust="spacingAndGlyphs" font-weight="bold">Resistore forno 2</text><text x="0" y="0" transform="translate(950.9,518.8) rotate(-90)" fill="#ffff00" font-size="8.78" text-anchor="start" textLength="2.8" lengthAdjust="spacingAndGlyphs" font-weight="bold">1</text><text x="0" y="0" transform="translate(950.9,549.2) rotate(-90)" fill="#ffff00" font-size="8.78" text-anchor="start" textLength="3.8" lengthAdjust="spacingAndGlyphs" font-weight="bold">2</text><text x="0" y="0" transform="translate(815,490.5) rotate(-90)" fill="#ffff00" font-size="8.92" text-anchor="start" textLength="12" lengthAdjust="spacingAndGlyphs" font-weight="bold">L1.7</text><text x="0" y="0" transform="translate(842,490.5) rotate(-90)" fill="#ffff00" font-size="8.92" text-anchor="start" textLength="12" lengthAdjust="spacingAndGlyphs" font-weight="bold">L2.7</text><text x="0" y="0" transform="translate(951,490.5) rotate(-90)" fill="#ffff00" font-size="8.92" text-anchor="start" textLength="12" lengthAdjust="spacingAndGlyphs" font-weight="bold">L2.9</text><text x="0" y="0" transform="translate(978,490.5) rotate(-90)" fill="#ffff00" font-size="8.92" text-anchor="start" textLength="12" lengthAdjust="spacingAndGlyphs" font-weight="bold">L3.9</text><text x="0" y="0" transform="translate(1087,480.5) rotate(-90)" fill="#ffff00" font-size="8.92" text-anchor="start" textLength="15" lengthAdjust="spacingAndGlyphs" font-weight="bold">L3.11</text><text x="0" y="0" transform="translate(1114,480.5) rotate(-90)" fill="#ffff00" font-size="8.92" text-anchor="start" textLength="12" lengthAdjust="spacingAndGlyphs" font-weight="bold">N.11</text><rect x="1090" y="446.5" width="1" height="50.5" fill="#00ffff" shape-rendering="crispEdges"/><rect x="1090" y="497" width="1" height="14.300000000000011" fill="#00ff00" shape-rendering="crispEdges"/><rect x="1117" y="446.5" width="1" height="50.5" fill="#00ffff" shape-rendering="crispEdges"/><rect x="1117" y="497" width="1" height="14.300000000000011" fill="#00ff00" shape-rendering="crispEdges"/><line x1="1090.5" y1="511.3" x2="1096.3" y2="518.7" stroke="#00ff00" stroke-width="1" /><line x1="1117.5" y1="511.3" x2="1110.6" y2="518.7" stroke="#00ff00" stroke-width="1" /><circle cx="1104" cy="538.5" r="20" fill="none" stroke="#00ff00" stroke-width="1"/><text x="0" y="0" transform="translate(1101.3,535.4)" fill="#00ff00" font-size="9.60" text-anchor="start" textLength="5.2" lengthAdjust="spacingAndGlyphs">M</text><text x="0" y="0" transform="translate(1094.3,545.5)" fill="#00ff00" font-size="9.60" text-anchor="start" textLength="2.2" lengthAdjust="spacingAndGlyphs">1</text><path d="M1100.5 543.5 C1102.5 539.5 1104.5 539.5 1106.5 542.5 S1110.5 545.5 1113 541" stroke="#00ff00" fill="none" stroke-width="1"/><text x="0" y="0" transform="translate(1075.7,525.4)" fill="#00ffff" font-size="8.37" text-anchor="end" textLength="11.7" lengthAdjust="spacingAndGlyphs">+E</text><text x="0" y="0" transform="translate(1075.7,536.5)" fill="#00ffff" font-size="9.74" text-anchor="end" textLength="29.5" lengthAdjust="spacingAndGlyphs">2MAA3</text><text x="0" y="0" transform="translate(1080.2,569.7)" fill="#ffff00" font-size="6.86" text-anchor="start" textLength="45.3" lengthAdjust="spacingAndGlyphs" font-weight="bold">Ventola forno</text><text x="0" y="0" transform="translate(1086.9,505.2) rotate(-90)" fill="#ffff00" font-size="8.78" text-anchor="start" textLength="2.8" lengthAdjust="spacingAndGlyphs" font-weight="bold">1</text><text x="0" y="0" transform="translate(1113.9,505.2) rotate(-90)" fill="#ffff00" font-size="8.78" text-anchor="start" textLength="3.8" lengthAdjust="spacingAndGlyphs" font-weight="bold">3</text><line x1="772" y1="491.5" x2="1144.5" y2="491.5" stroke="#ff0000" stroke-width="1" stroke-dasharray="11,4.1" shape-rendering="crispEdges"/><line x1="1144.5" y1="491.5" x2="1144.5" y2="601" stroke="#ff0000" stroke-width="1" stroke-dasharray="11,4.1" shape-rendering="crispEdges"/><line x1="772" y1="599.5" x2="1144.5" y2="599.5" stroke="#ff0000" stroke-width="1" stroke-dasharray="11,4.1" shape-rendering="crispEdges"/><rect x="767" y="592" width="399" height="1" fill="#00ffff" shape-rendering="crispEdges"/><defs><linearGradient id="sh" x1="0" x2="1"><stop offset="0" stop-color="#000" stop-opacity="0.30"/><stop offset="1" stop-color="#000" stop-opacity="0"/></linearGradient></defs><rect x="767" y="0" width="8" height="601" fill="url(#sh)"/></svg>
<div class="a" style="left:0;top:0;width:768px;height:601px;background:#fff;overflow:hidden"><div style="position:absolute;left:0px;top:0px;width:768px;height:1px;background:#0c0d10;"></div><div style="position:absolute;left:0px;top:0px;width:1px;height:601px;background:#1b1f26;"></div><div style="position:absolute;left:1px;top:1px;width:1px;height:600px;background:#8c9096;"></div><div class="a" style="left:30.10px;top:10.04px;font-size:12px;line-height:12px;white-space:nowrap;color:#000;transform:scaleX(0.9806);transform-origin:0 0">Analisi dei flussi di potenza</div><svg class="a" style="left:747px;top:9px" width="12" height="12"><path d="M1 1L11 11M11 1L1 11" stroke="#000" stroke-width="1.1"/></svg><svg class="a" style="left:8px;top:5px" width="18" height="19" viewBox="8 5 18 19">
<g fill="#000"><rect x="16" y="7" width="5" height="3"/><rect x="13" y="13" width="5" height="3"/><rect x="19" y="13" width="5" height="3"/>
<rect x="10" y="19" width="5" height="3"/><rect x="16" y="19" width="5" height="3"/>
<rect x="18" y="10" width="1" height="1"/><rect x="15" y="11" width="7" height="1"/><rect x="15" y="12" width="1" height="1"/><rect x="21" y="12" width="1" height="1"/>
<rect x="15" y="16" width="1" height="1"/><rect x="12" y="17" width="7" height="1"/><rect x="12" y="18" width="1" height="1"/><rect x="18" y="18" width="1" height="1"/></g>
<g fill="#f5b800"><rect x="17" y="8" width="3" height="1"/><rect x="14" y="14" width="3" height="1"/><rect x="20" y="14" width="3" height="1"/></g>
<g fill="#b8a4a4"><rect x="11" y="20" width="3" height="1"/><rect x="17" y="20" width="3" height="1"/></g>
<g fill="none" stroke="#000" stroke-width="0.6" stroke-opacity="0.5"><rect x="15.8" y="6.8" width="5.4" height="3.4" rx="0.8"/><rect x="12.8" y="12.8" width="5.4" height="3.4" rx="0.8"/><rect x="18.8" y="12.8" width="5.4" height="3.4" rx="0.8"/><rect x="9.8" y="18.8" width="5.4" height="3.4" rx="0.8"/><rect x="15.8" y="18.8" width="5.4" height="3.4" rx="0.8"/></g>
</svg><div style="position:absolute;left:1px;top:31px;width:767px;height:46px;background:#f0f0f0;"></div><div style="position:absolute;left:1px;top:76px;width:767px;height:1px;background:#f6f6f6;"></div><div style="position:absolute;left:1px;top:77px;width:767px;height:1px;background:#828288;"></div><div class="a" style="left:6.00px;top:57.09px;font-size:11px;line-height:11px;white-space:nowrap;color:#000;transform:scaleX(0.9536);transform-origin:0 0">Aggiorna</div><svg class="a" style="left:18px;top:36px" width="20" height="20" viewBox="18 36 20 20">
<defs><linearGradient id="rg" x1="0" y1="0" x2="0" y2="1"><stop offset="0" stop-color="#a8e4fc"/><stop offset="1" stop-color="#3aa0e8"/></linearGradient></defs>
<path d="M21.3 44.1 A6.5 6.5 0 0 1 32.2 41.2 L35.3 38.3 L35.3 45.2 L28.6 45.2 L30.5 43.4 A3.6 3.6 0 0 0 24.3 44.9 Z" fill="url(#rg)" stroke="#1463d8" stroke-width="1.1" stroke-linejoin="round"/>
<path d="M34.2 47.9 A6.5 6.5 0 0 1 23.3 50.8 L20.2 53.7 L20.2 46.8 L26.9 46.8 L25.0 48.6 A3.6 3.6 0 0 0 31.2 47.1 Z" fill="url(#rg)" stroke="#1463d8" stroke-width="1.1" stroke-linejoin="round"/>
</svg><div class="a" style="left:59.30px;top:57.09px;font-size:11px;line-height:11px;white-space:nowrap;color:#000;transform:scaleX(0.9730);transform-origin:0 0">Nascondi finestra</div><svg class="a" style="left:93px;top:37px" width="18" height="18" viewBox="93 37 18 18">
<rect x="95.5" y="39.5" width="13" height="3" fill="#0c5cc8" stroke="#0b3a84" stroke-width="1"/>
<rect x="106" y="40" width="1.4" height="1.4" fill="#e8f4ff"/>
<g fill="#1c2a4c"><rect x="95" y="43" width="1" height="1"/><rect x="95" y="45" width="1" height="1"/><rect x="95" y="47" width="1" height="1"/><rect x="95" y="49" width="1" height="1"/><rect x="95" y="51" width="1" height="1"/>
<rect x="108" y="43" width="1" height="1"/><rect x="108" y="45" width="1" height="1"/><rect x="108" y="47" width="1" height="1"/><rect x="108" y="49" width="1" height="1"/><rect x="108" y="51" width="1" height="1"/>
<rect x="97" y="52" width="1" height="1"/><rect x="99" y="52" width="1" height="1"/><rect x="101" y="52" width="2" height="1"/><rect x="104" y="52" width="1" height="1"/><rect x="106" y="52" width="1" height="1"/><rect x="95" y="52" width="1" height="1"/><rect x="108" y="52" width="1" height="1"/></g>
</svg><div class="a" style="left:161.70px;top:57.09px;font-size:11px;line-height:11px;white-space:nowrap;color:#000;transform:scaleX(0.9848);transform-origin:0 0">Trova</div><svg class="a" style="left:166px;top:36px" width="20" height="20" viewBox="166 36 20 20">
<circle cx="178.2" cy="43.8" r="3.7" fill="#fdfdfd" fill-opacity="0.3" stroke="#1a6cc4" stroke-width="1.9"/>
<path d="M175.4 46.8 L171.4 50.8" stroke="#1c2c64" stroke-width="2.3" stroke-linecap="round"/>
</svg><div class="a" style="left:200.50px;top:57.09px;font-size:11px;line-height:11px;white-space:nowrap;color:#000;transform:scaleX(0.9157);transform-origin:0 0">Localizza simbolo</div><svg class="a" style="left:231px;top:36px" width="20" height="20" viewBox="231 36 20 20">
<rect x="244" y="38" width="1" height="7" fill="#10108a"/>
<rect x="233" y="50" width="5" height="1" fill="#10108a"/>
<circle cx="238.3" cy="43.6" r="3.4" fill="#e8f0fa" fill-opacity="0.5" stroke="#1a86d0" stroke-width="1.1" stroke-dasharray="1.4,0.7"/>
<rect x="235" y="38" width="1" height="5" fill="#5a0a0a"/><rect x="233" y="40" width="5" height="1" fill="#5a0a0a"/>
<rect x="235" y="40" width="1" height="1" fill="#f0e000"/>
<g fill="#000"><rect x="239" y="44" width="3.5" height="3"/><rect x="244.5" y="44" width="3" height="3"/>
<rect x="237" y="46.5" width="6" height="7.5"/><rect x="244" y="46.5" width="5" height="7.5"/>
<rect x="242" y="47" width="2.5" height="4"/></g>
<g fill="#fff"><rect x="240" y="45" width="1" height="1"/><rect x="245.5" y="45" width="1" height="1"/>
<rect x="239" y="47" width="1" height="1"/><rect x="244.5" y="47" width="1" height="1"/>
<rect x="239" y="49" width="1" height="1"/><rect x="242.6" y="48" width="1" height="2" fill-opacity="0.6"/><rect x="244.5" y="49" width="1" height="1"/>
<rect x="238" y="51" width="1" height="2"/><rect x="246" y="51" width="1" height="2"/></g>
</svg><div class="a" style="left:299.40px;top:57.09px;font-size:11px;line-height:11px;white-space:nowrap;color:#000;transform:scaleX(0.9647);transform-origin:0 0">Modifica dati tecnici</div><svg class="a" style="left:337px;top:38px" width="20" height="16" viewBox="337 38 20 16">
<defs><linearGradient id="ng" x1="0" y1="0" x2="1" y2="1"><stop offset="0" stop-color="#f4ec90"/><stop offset="1" stop-color="#fffce8"/></linearGradient></defs>
<path d="M339.5 40.5h11l4 4v7h-15z" fill="url(#ng)" stroke="#7c7c7c" stroke-width="1"/>
<path d="M350.5 40.5v4h4" fill="#f4f4f4" stroke="#9a9a9a" stroke-width="0.9"/>
<path d="M347.2 51.6 L353.6 45.2" stroke="#6a5020" stroke-width="3.2" stroke-linecap="round"/>
<path d="M347.2 51.6 L353.6 45.2" stroke="#f2c41c" stroke-width="1.6"/>
<rect x="346" y="51" width="1.6" height="1.6" fill="#303050"/>
</svg><div class="a" style="left:403.50px;top:57.09px;font-size:11px;line-height:11px;white-space:nowrap;color:#000;transform:scaleX(0.9687);transform-origin:0 0">Edita componente</div><svg class="a" style="left:441px;top:38px" width="12" height="16" viewBox="441 38 12 16">
<path d="M445 39.2 L448.2 42.4 M448.2 39.2 L445 42.4" stroke="#c414c4" stroke-width="1.2"/>
<rect x="446.2" y="42.5" width="1" height="4" fill="#6a6a8a"/>
<rect x="443.6" y="46.4" width="6" height="6" rx="1.3" fill="#e4e6ea" stroke="#6c6c6c" stroke-width="1.2"/>
</svg><div class="a" style="left:500.60px;top:57.09px;font-size:11px;line-height:11px;white-space:nowrap;color:#000;transform:scaleX(1.0032);transform-origin:0 0">Edita attributi</div><svg class="a" style="left:524px;top:36px" width="20" height="20" viewBox="524 36 20 20">
<path d="M528.5 39.5 h11 l1.5 3 v6.5 l-4.5 4 l-8 -8 z" fill="#fbfdff" stroke="#2a78d0" stroke-width="1.1" stroke-linejoin="round"/>
<circle cx="531.5" cy="42.5" r="1.3" fill="#2a78d0"/>
<path d="M526.2 38.8 L530.4 42.6" stroke="#1a1a1a" stroke-width="1"/>
<path d="M533 52 L540.6 38.6" stroke="#5a3a18" stroke-width="2.8" stroke-linecap="round"/>
<path d="M533.2 51.6 L540.4 39" stroke="#f4c818" stroke-width="1.3"/>
<circle cx="540.6" cy="38.6" r="1" fill="#6a3050"/>
<circle cx="532.8" cy="52.2" r="0.9" fill="#000"/>
</svg><div class="a" style="left:588.60px;top:57.09px;font-size:11px;line-height:11px;white-space:nowrap;color:#000;transform:scaleX(0.9679);transform-origin:0 0">Esporta</div><svg class="a" style="left:598px;top:36px" width="20" height="20" viewBox="598 36 20 20">
<path d="M603.5 38.5h9l3.5 3.5v11.5h-12.5z" fill="#fff" stroke="#3c3c3c" stroke-width="1.1"/>
<path d="M612.5 38.5v3.5h3.5z" fill="#3c3c3c" stroke="#3c3c3c" stroke-width="0.8"/>
<rect x="600.5" y="41.5" width="9.5" height="10" fill="#f6fff9" stroke="#1f8a4c" stroke-width="1.2"/>
<path d="M603.2 44.2 L607.4 49.2 M607.4 44.2 L603.2 49.2" stroke="#1f8a4c" stroke-width="1.9"/>
</svg><div style="position:absolute;left:151px;top:33px;width:1px;height:40px;background:#a0a0a0;"></div><div style="position:absolute;left:289px;top:33px;width:1px;height:40px;background:#a0a0a0;"></div><div style="position:absolute;left:574px;top:33px;width:1px;height:40px;background:#a0a0a0;"></div><svg class="a" style="left:637px;top:50px" width="9" height="6"><path d="M1 1h7l-3.5 4z" fill="#202020"/></svg><div style="position:absolute;left:1px;top:78px;width:766px;height:292px;background:#fff;"></div><div class="a" style="left:8.90px;top:85.89px;font-size:11px;line-height:11px;white-space:nowrap;color:#000;transform:scaleX(0.9542);transform-origin:0 0">Componente</div><div style="position:absolute;left:122px;top:80px;width:1px;height:24px;background:#e5e5e5;"></div><div class="a" style="left:128.60px;top:85.89px;font-size:11px;line-height:11px;white-space:nowrap;color:#000;transform:scaleX(0.9489);transform-origin:0 0">Collegamento</div><div style="position:absolute;left:222px;top:80px;width:1px;height:24px;background:#e5e5e5;"></div><div class="a" style="left:228.60px;top:85.89px;font-size:11px;line-height:11px;white-space:nowrap;color:#000;transform:scaleX(0.9096);transform-origin:0 0">Fasi</div><div style="position:absolute;left:303px;top:80px;width:1px;height:24px;background:#e5e5e5;"></div><div class="a" style="left:309.60px;top:85.89px;font-size:11px;line-height:11px;white-space:nowrap;color:#000;transform:scaleX(0.9724);transform-origin:0 0">Tensione[V]</div><div style="position:absolute;left:403px;top:80px;width:1px;height:24px;background:#e5e5e5;"></div><div class="a" style="left:409.60px;top:85.89px;font-size:11px;line-height:11px;white-space:nowrap;color:#000;transform:scaleX(0.9750);transform-origin:0 0">Potenza[kW]</div><div style="position:absolute;left:503px;top:80px;width:1px;height:24px;background:#e5e5e5;"></div><div class="a" style="left:509.60px;top:85.89px;font-size:11px;line-height:11px;white-space:nowrap;color:#000;transform:scaleX(0.9691);transform-origin:0 0">Potenza[kVA]</div><div style="position:absolute;left:603px;top:80px;width:1px;height:24px;background:#e5e5e5;"></div><div class="a" style="left:609.60px;top:85.89px;font-size:11px;line-height:11px;white-space:nowrap;color:#000;transform:scaleX(1.0342);transform-origin:0 0">I1[A]</div><div style="position:absolute;left:683px;top:80px;width:1px;height:24px;background:#e5e5e5;"></div><div class="a" style="left:689.60px;top:85.89px;font-size:11px;line-height:11px;white-space:nowrap;color:#000;transform:scaleX(1.0430);transform-origin:0 0">I2[A]</div><svg class="a" style="left:8px;top:108px" width="10" height="10"><path d="M1.3 8.7 L8.7 1.3 L8.7 8.7z" fill="#5a5a5a" stroke="#2a2a2a" stroke-width="0.9" stroke-linejoin="round"/></svg><div style="position:absolute;left:24px;top:107.91px;font-size:10.5px;line-height:10.5px;color:#000;white-space:nowrap;">+P</div><div style="position:absolute;left:39.5px;top:126.91px;font-size:10.5px;line-height:10.5px;color:#000;white-space:nowrap;">5KEB1:13</div><div style="position:absolute;left:127px;top:126.91px;font-size:10.5px;line-height:10.5px;color:#000;white-space:nowrap;">Continua</div><div style="position:absolute;left:308px;top:126.91px;font-size:10.5px;line-height:10.5px;color:#000;white-space:nowrap;">24</div><div style="position:absolute;left:408px;top:126.91px;font-size:10.5px;line-height:10.5px;color:#000;white-space:nowrap;">0,02</div><div style="position:absolute;left:508px;top:126.91px;font-size:10.5px;line-height:10.5px;color:#000;white-space:nowrap;">0,02</div><div style="position:absolute;left:608px;top:126.91px;font-size:10.5px;line-height:10.5px;color:#000;white-space:nowrap;">0,8</div><div style="position:absolute;left:688px;top:126.91px;font-size:10.5px;line-height:10.5px;color:#000;white-space:nowrap;">-</div><div style="position:absolute;left:39.5px;top:145.91px;font-size:10.5px;line-height:10.5px;color:#000;white-space:nowrap;">5KEB1:16</div><div style="position:absolute;left:127px;top:145.91px;font-size:10.5px;line-height:10.5px;color:#000;white-space:nowrap;">Continua</div><div style="position:absolute;left:308px;top:145.91px;font-size:10.5px;line-height:10.5px;color:#000;white-space:nowrap;">24</div><div style="position:absolute;left:408px;top:145.91px;font-size:10.5px;line-height:10.5px;color:#000;white-space:nowrap;">0,02</div><div style="position:absolute;left:508px;top:145.91px;font-size:10.5px;line-height:10.5px;color:#000;white-space:nowrap;">0,02</div><div style="position:absolute;left:608px;top:145.91px;font-size:10.5px;line-height:10.5px;color:#000;white-space:nowrap;">0,8</div><div style="position:absolute;left:688px;top:145.91px;font-size:10.5px;line-height:10.5px;color:#000;white-space:nowrap;">-</div><svg class="a" style="left:8px;top:165px" width="10" height="10"><path d="M1.3 8.7 L8.7 1.3 L8.7 8.7z" fill="#5a5a5a" stroke="#2a2a2a" stroke-width="0.9" stroke-linejoin="round"/></svg><div style="position:absolute;left:24px;top:164.91px;font-size:10.5px;line-height:10.5px;color:#000;white-space:nowrap;">+Q</div><div style="position:absolute;left:39.5px;top:183.91px;font-size:10.5px;line-height:10.5px;color:#000;white-space:nowrap;">2QAB1</div><div style="position:absolute;left:127px;top:183.91px;font-size:10.5px;line-height:10.5px;color:#000;white-space:nowrap;">3F+N</div><div style="position:absolute;left:227px;top:183.91px;font-size:10.5px;line-height:10.5px;color:#000;white-space:nowrap;">L1,L2,L3,N</div><div style="position:absolute;left:308px;top:183.91px;font-size:10.5px;line-height:10.5px;color:#000;white-space:nowrap;">400</div><div style="position:absolute;left:408px;top:183.91px;font-size:10.5px;line-height:10.5px;color:#000;white-space:nowrap;">8,87</div><div style="position:absolute;left:508px;top:183.91px;font-size:10.5px;line-height:10.5px;color:#000;white-space:nowrap;">9,079</div><div style="position:absolute;left:608px;top:183.91px;font-size:10.5px;line-height:10.5px;color:#000;white-space:nowrap;">10,6</div><div style="position:absolute;left:688px;top:183.91px;font-size:10.5px;line-height:10.5px;color:#000;white-space:nowrap;">15,8</div><div style="position:absolute;left:39.5px;top:202.91px;font-size:10.5px;line-height:10.5px;color:#000;white-space:nowrap;">2QAB2</div><div style="position:absolute;left:127px;top:202.91px;font-size:10.5px;line-height:10.5px;color:#000;white-space:nowrap;">3F</div><div style="position:absolute;left:227px;top:202.91px;font-size:10.5px;line-height:10.5px;color:#000;white-space:nowrap;">L1,L2,L3</div><div style="position:absolute;left:308px;top:202.91px;font-size:10.5px;line-height:10.5px;color:#000;white-space:nowrap;">400</div><div style="position:absolute;left:408px;top:202.91px;font-size:10.5px;line-height:10.5px;color:#000;white-space:nowrap;">1</div><div style="position:absolute;left:508px;top:202.91px;font-size:10.5px;line-height:10.5px;color:#000;white-space:nowrap;">1,111</div><div style="position:absolute;left:608px;top:202.91px;font-size:10.5px;line-height:10.5px;color:#000;white-space:nowrap;">1,6</div><div style="position:absolute;left:688px;top:202.91px;font-size:10.5px;line-height:10.5px;color:#000;white-space:nowrap;">1,6</div><div style="position:absolute;left:39.5px;top:221.91px;font-size:10.5px;line-height:10.5px;color:#000;white-space:nowrap;">2QAB3</div><div style="position:absolute;left:127px;top:221.91px;font-size:10.5px;line-height:10.5px;color:#000;white-space:nowrap;">3F</div><div style="position:absolute;left:227px;top:221.91px;font-size:10.5px;line-height:10.5px;color:#000;white-space:nowrap;">L1,L2,L3</div><div style="position:absolute;left:308px;top:221.91px;font-size:10.5px;line-height:10.5px;color:#000;white-space:nowrap;">400</div><div style="position:absolute;left:408px;top:221.91px;font-size:10.5px;line-height:10.5px;color:#000;white-space:nowrap;">1</div><div style="position:absolute;left:508px;top:221.91px;font-size:10.5px;line-height:10.5px;color:#000;white-space:nowrap;">1,111</div><div style="position:absolute;left:608px;top:221.91px;font-size:10.5px;line-height:10.5px;color:#000;white-space:nowrap;">1,6</div><div style="position:absolute;left:688px;top:221.91px;font-size:10.5px;line-height:10.5px;color:#000;white-space:nowrap;">1,6</div><div style="position:absolute;left:3px;top:236px;width:747px;height:19px;background:#a6caf0;"></div><div class="a" style="left:3px;top:236px;width:750px;height:17px;border:1px dotted #000;border-right:none"></div><div style="position:absolute;left:39.5px;top:240.91px;font-size:10.5px;line-height:10.5px;color:#000;white-space:nowrap;">2QAB4</div><div style="position:absolute;left:127px;top:240.91px;font-size:10.5px;line-height:10.5px;color:#000;white-space:nowrap;">3F+N</div><div style="position:absolute;left:227px;top:240.91px;font-size:10.5px;line-height:10.5px;color:#000;white-space:nowrap;">L1,L2,L3,N</div><div style="position:absolute;left:308px;top:240.91px;font-size:10.5px;line-height:10.5px;color:#000;white-space:nowrap;">400</div><div style="position:absolute;left:408px;top:240.91px;font-size:10.5px;line-height:10.5px;color:#000;white-space:nowrap;">5,1</div><div style="position:absolute;left:508px;top:240.91px;font-size:10.5px;line-height:10.5px;color:#000;white-space:nowrap;">5,106</div><div style="position:absolute;left:608px;top:240.91px;font-size:10.5px;line-height:10.5px;color:#000;white-space:nowrap;">5,7</div><div style="position:absolute;left:688px;top:240.91px;font-size:10.5px;line-height:10.5px;color:#000;white-space:nowrap;">10</div><div style="position:absolute;left:39.5px;top:259.91px;font-size:10.5px;line-height:10.5px;color:#000;white-space:nowrap;">2QAB5</div><div style="position:absolute;left:127px;top:259.91px;font-size:10.5px;line-height:10.5px;color:#000;white-space:nowrap;">2F</div><div style="position:absolute;left:227px;top:259.91px;font-size:10.5px;line-height:10.5px;color:#000;white-space:nowrap;">L1,L2</div><div style="position:absolute;left:308px;top:259.91px;font-size:10.5px;line-height:10.5px;color:#000;white-space:nowrap;">400</div><div style="position:absolute;left:408px;top:259.91px;font-size:10.5px;line-height:10.5px;color:#000;white-space:nowrap;">2,3</div><div style="position:absolute;left:508px;top:259.91px;font-size:10.5px;line-height:10.5px;color:#000;white-space:nowrap;">2,3</div><div style="position:absolute;left:608px;top:259.91px;font-size:10.5px;line-height:10.5px;color:#000;white-space:nowrap;">5,8</div><div style="position:absolute;left:688px;top:259.91px;font-size:10.5px;line-height:10.5px;color:#000;white-space:nowrap;">5,8</div><div style="position:absolute;left:39.5px;top:278.91px;font-size:10.5px;line-height:10.5px;color:#000;white-space:nowrap;">2QAB6</div><div style="position:absolute;left:127px;top:278.91px;font-size:10.5px;line-height:10.5px;color:#000;white-space:nowrap;">2F</div><div style="position:absolute;left:227px;top:278.91px;font-size:10.5px;line-height:10.5px;color:#000;white-space:nowrap;">L2,L3</div><div style="position:absolute;left:308px;top:278.91px;font-size:10.5px;line-height:10.5px;color:#000;white-space:nowrap;">400</div><div style="position:absolute;left:408px;top:278.91px;font-size:10.5px;line-height:10.5px;color:#000;white-space:nowrap;">2,3</div><div style="position:absolute;left:508px;top:278.91px;font-size:10.5px;line-height:10.5px;color:#000;white-space:nowrap;">2,3</div><div style="position:absolute;left:608px;top:278.91px;font-size:10.5px;line-height:10.5px;color:#000;white-space:nowrap;">-</div><div style="position:absolute;left:688px;top:278.91px;font-size:10.5px;line-height:10.5px;color:#000;white-space:nowrap;">5,8</div><div style="position:absolute;left:39.5px;top:297.91px;font-size:10.5px;line-height:10.5px;color:#000;white-space:nowrap;">2QAB7</div><div style="position:absolute;left:127px;top:297.91px;font-size:10.5px;line-height:10.5px;color:#000;white-space:nowrap;">F+N</div><div style="position:absolute;left:227px;top:297.91px;font-size:10.5px;line-height:10.5px;color:#000;white-space:nowrap;">L3,N</div><div style="position:absolute;left:308px;top:297.91px;font-size:10.5px;line-height:10.5px;color:#000;white-space:nowrap;">231</div><div style="position:absolute;left:408px;top:297.91px;font-size:10.5px;line-height:10.5px;color:#000;white-space:nowrap;">0,5</div><div style="position:absolute;left:508px;top:297.91px;font-size:10.5px;line-height:10.5px;color:#000;white-space:nowrap;">0,556</div><div style="position:absolute;left:608px;top:297.91px;font-size:10.5px;line-height:10.5px;color:#000;white-space:nowrap;">-</div><div style="position:absolute;left:688px;top:297.91px;font-size:10.5px;line-height:10.5px;color:#000;white-space:nowrap;">-</div><div style="position:absolute;left:39.5px;top:316.91px;font-size:10.5px;line-height:10.5px;color:#000;white-space:nowrap;">3QAB1</div><div style="position:absolute;left:127px;top:316.91px;font-size:10.5px;line-height:10.5px;color:#000;white-space:nowrap;">3F+N</div><div style="position:absolute;left:227px;top:316.91px;font-size:10.5px;line-height:10.5px;color:#000;white-space:nowrap;">L1,L2,L3,N</div><div style="position:absolute;left:308px;top:316.91px;font-size:10.5px;line-height:10.5px;color:#000;white-space:nowrap;">400</div><div style="position:absolute;left:408px;top:316.91px;font-size:10.5px;line-height:10.5px;color:#000;white-space:nowrap;">1,5</div><div style="position:absolute;left:508px;top:316.91px;font-size:10.5px;line-height:10.5px;color:#000;white-space:nowrap;">1,667</div><div style="position:absolute;left:608px;top:316.91px;font-size:10.5px;line-height:10.5px;color:#000;white-space:nowrap;">2,4</div><div style="position:absolute;left:688px;top:316.91px;font-size:10.5px;line-height:10.5px;color:#000;white-space:nowrap;">2,4</div><div style="position:absolute;left:39.5px;top:335.91px;font-size:10.5px;line-height:10.5px;color:#000;white-space:nowrap;">3TAA1</div><div style="position:absolute;left:127px;top:335.91px;font-size:10.5px;line-height:10.5px;color:#000;white-space:nowrap;">F+N</div><div style="position:absolute;left:227px;top:335.91px;font-size:10.5px;line-height:10.5px;color:#000;white-space:nowrap;">L1,N</div><div style="position:absolute;left:308px;top:335.91px;font-size:10.5px;line-height:10.5px;color:#000;white-space:nowrap;">231</div><div style="position:absolute;left:408px;top:335.91px;font-size:10.5px;line-height:10.5px;color:#000;white-space:nowrap;">0,27</div><div style="position:absolute;left:508px;top:335.91px;font-size:10.5px;line-height:10.5px;color:#000;white-space:nowrap;">0,27</div><div style="position:absolute;left:608px;top:335.91px;font-size:10.5px;line-height:10.5px;color:#000;white-space:nowrap;">1,2</div><div style="position:absolute;left:688px;top:335.91px;font-size:10.5px;line-height:10.5px;color:#000;white-space:nowrap;">-</div><div style="position:absolute;left:750px;top:78px;width:16px;height:275px;background:#f0f0f0;"></div><div style="position:absolute;left:750px;top:96px;width:16px;height:141px;background:#cdcdcd;"></div><svg class="a" style="left:0;top:0" width="768" height="601"><path d="M754.4 90.2 L757.5999999999999 86.6 L760.8 90.2" stroke="#5a5a5a" stroke-width="2" fill="none"/></svg><svg class="a" style="left:0;top:0" width="768" height="601"><path d="M754.4 341.8 L757.5999999999999 345.4 L760.8 341.8" stroke="#5a5a5a" stroke-width="2" fill="none"/></svg><div style="position:absolute;left:3px;top:353px;width:763px;height:15px;background:#f0f0f0;"></div><div style="position:absolute;left:20px;top:353px;width:577px;height:15px;background:#cdcdcd;"></div><svg class="a" style="left:0;top:0" width="768" height="601"><path d="M13.6 357.6 L9.6 360.6 L13.6 363.6" stroke="#5a5a5a" stroke-width="2" fill="none"/></svg><svg class="a" style="left:0;top:0" width="768" height="601"><path d="M738.6 357.6 L742.6 360.6 L738.6 363.6" stroke="#5a5a5a" stroke-width="2" fill="none"/></svg><div style="position:absolute;left:750px;top:353px;width:16px;height:15px;background:#f0f0f0;"></div><div style="position:absolute;left:1px;top:370px;width:767px;height:1px;background:#828288;"></div><div style="position:absolute;left:1px;top:371px;width:767px;height:3px;background:#c5c5c8;"></div><div style="position:absolute;left:1px;top:374px;width:767px;height:36px;background:#f0f0f0;"></div><div style="position:absolute;left:1px;top:410px;width:767px;height:1px;background:#828288;"></div><div class="a" style="left:5.50px;top:395.99px;font-size:11px;line-height:11px;white-space:nowrap;color:#000;transform:scaleX(0.9157);transform-origin:0 0">Localizza simbolo</div><svg class="a" style="left:36px;top:375px" width="20" height="20" viewBox="231 36 20 20">
<rect x="244" y="38" width="1" height="7" fill="#10108a"/>
<rect x="233" y="50" width="5" height="1" fill="#10108a"/>
<circle cx="238.3" cy="43.6" r="3.4" fill="#e8f0fa" fill-opacity="0.5" stroke="#1a86d0" stroke-width="1.1" stroke-dasharray="1.4,0.7"/>
<rect x="235" y="38" width="1" height="5" fill="#5a0a0a"/><rect x="233" y="40" width="5" height="1" fill="#5a0a0a"/>
<rect x="235" y="40" width="1" height="1" fill="#f0e000"/>
<g fill="#000"><rect x="239" y="44" width="3.5" height="3"/><rect x="244.5" y="44" width="3" height="3"/>
<rect x="237" y="46.5" width="6" height="7.5"/><rect x="244" y="46.5" width="5" height="7.5"/>
<rect x="242" y="47" width="2.5" height="4"/></g>
<g fill="#fff"><rect x="240" y="45" width="1" height="1"/><rect x="245.5" y="45" width="1" height="1"/>
<rect x="239" y="47" width="1" height="1"/><rect x="244.5" y="47" width="1" height="1"/>
<rect x="239" y="49" width="1" height="1"/><rect x="242.6" y="48" width="1" height="2" fill-opacity="0.6"/><rect x="244.5" y="49" width="1" height="1"/>
<rect x="238" y="51" width="1" height="2"/><rect x="246" y="51" width="1" height="2"/></g>
</svg><div class="a" style="left:104.30px;top:395.99px;font-size:11px;line-height:11px;white-space:nowrap;color:#000;transform:scaleX(0.9658);transform-origin:0 0">Modifica dati tecnici</div><svg class="a" style="left:142px;top:376px" width="20" height="16" viewBox="337 38 20 16">
<defs><linearGradient id="ng" x1="0" y1="0" x2="1" y2="1"><stop offset="0" stop-color="#f4ec90"/><stop offset="1" stop-color="#fffce8"/></linearGradient></defs>
<path d="M339.5 40.5h11l4 4v7h-15z" fill="url(#ng)" stroke="#7c7c7c" stroke-width="1"/>
<path d="M350.5 40.5v4h4" fill="#f4f4f4" stroke="#9a9a9a" stroke-width="0.9"/>
<path d="M347.2 51.6 L353.6 45.2" stroke="#6a5020" stroke-width="3.2" stroke-linecap="round"/>
<path d="M347.2 51.6 L353.6 45.2" stroke="#f2c41c" stroke-width="1.6"/>
<rect x="346" y="51" width="1.6" height="1.6" fill="#303050"/>
</svg><div class="a" style="left:208.30px;top:395.99px;font-size:11px;line-height:11px;white-space:nowrap;color:#000;transform:scaleX(0.9665);transform-origin:0 0">Edita componente</div><svg class="a" style="left:245.5px;top:376.5px" width="12" height="16" viewBox="441 38 12 16">
<path d="M445 39.2 L448.2 42.4 M448.2 39.2 L445 42.4" stroke="#c414c4" stroke-width="1.2"/>
<rect x="446.2" y="42.5" width="1" height="4" fill="#6a6a8a"/>
<rect x="443.6" y="46.4" width="6" height="6" rx="1.3" fill="#e4e6ea" stroke="#6c6c6c" stroke-width="1.2"/>
</svg><div class="a" style="left:305.40px;top:395.99px;font-size:11px;line-height:11px;white-space:nowrap;color:#000;transform:scaleX(1.0110);transform-origin:0 0">Edita attributi</div><svg class="a" style="left:329px;top:374.5px" width="20" height="20" viewBox="524 36 20 20">
<path d="M528.5 39.5 h11 l1.5 3 v6.5 l-4.5 4 l-8 -8 z" fill="#fbfdff" stroke="#2a78d0" stroke-width="1.1" stroke-linejoin="round"/>
<circle cx="531.5" cy="42.5" r="1.3" fill="#2a78d0"/>
<path d="M526.2 38.8 L530.4 42.6" stroke="#1a1a1a" stroke-width="1"/>
<path d="M533 52 L540.6 38.6" stroke="#5a3a18" stroke-width="2.8" stroke-linecap="round"/>
<path d="M533.2 51.6 L540.4 39" stroke="#f4c818" stroke-width="1.3"/>
<circle cx="540.6" cy="38.6" r="1" fill="#6a3050"/>
<circle cx="532.8" cy="52.2" r="0.9" fill="#000"/>
</svg><div style="position:absolute;left:94px;top:376px;width:1px;height:32px;background:#a0a0a0;"></div><div class="a" style="left:8.90px;top:419.09px;font-size:11px;line-height:11px;white-space:nowrap;color:#000;transform:scaleX(0.9542);transform-origin:0 0">Componente</div><div style="position:absolute;left:122px;top:412px;width:1px;height:24px;background:#e5e5e5;"></div><div class="a" style="left:128.60px;top:419.09px;font-size:11px;line-height:11px;white-space:nowrap;color:#000;transform:scaleX(0.9489);transform-origin:0 0">Collegamento</div><div style="position:absolute;left:222px;top:412px;width:1px;height:24px;background:#e5e5e5;"></div><div class="a" style="left:228.60px;top:419.09px;font-size:11px;line-height:11px;white-space:nowrap;color:#000;transform:scaleX(0.9096);transform-origin:0 0">Fasi</div><div style="position:absolute;left:322px;top:412px;width:1px;height:24px;background:#e5e5e5;"></div><div class="a" style="left:328.60px;top:419.09px;font-size:11px;line-height:11px;white-space:nowrap;color:#000;transform:scaleX(0.9724);transform-origin:0 0">Tensione[V]</div><div style="position:absolute;left:422px;top:412px;width:1px;height:24px;background:#e5e5e5;"></div><div class="a" style="left:428.60px;top:419.09px;font-size:11px;line-height:11px;white-space:nowrap;color:#000;transform:scaleX(0.9750);transform-origin:0 0">Potenza[kW]</div><div style="position:absolute;left:522px;top:412px;width:1px;height:24px;background:#e5e5e5;"></div><div class="a" style="left:528.60px;top:419.09px;font-size:11px;line-height:11px;white-space:nowrap;color:#000;transform:scaleX(0.9691);transform-origin:0 0">Potenza[kVA]</div><div style="position:absolute;left:622px;top:412px;width:1px;height:24px;background:#e5e5e5;"></div><div class="a" style="left:628.60px;top:419.09px;font-size:11px;line-height:11px;white-space:nowrap;color:#000;transform:scaleX(1.0342);transform-origin:0 0">I1[A]</div><div style="position:absolute;left:702px;top:412px;width:1px;height:24px;background:#e5e5e5;"></div><div class="a" style="left:708.60px;top:419.09px;font-size:11px;line-height:11px;white-space:nowrap;color:#000;transform:scaleX(1.0430);transform-origin:0 0">I2[A]</div><div style="position:absolute;left:23.3px;top:440.91px;font-size:10.5px;line-height:10.5px;color:#000;white-space:nowrap;">2MAA3</div><div style="position:absolute;left:127px;top:440.91px;font-size:10.5px;line-height:10.5px;color:#000;white-space:nowrap;">F+N</div><div style="position:absolute;left:227px;top:440.91px;font-size:10.5px;line-height:10.5px;color:#000;white-space:nowrap;">L3,N</div><div style="position:absolute;left:327px;top:440.91px;font-size:10.5px;line-height:10.5px;color:#000;white-space:nowrap;">231</div><div style="position:absolute;left:427px;top:440.91px;font-size:10.5px;line-height:10.5px;color:#000;white-space:nowrap;">0,5</div><div style="position:absolute;left:527px;top:440.91px;font-size:10.5px;line-height:10.5px;color:#000;white-space:nowrap;">0,556</div><div style="position:absolute;left:627px;top:440.91px;font-size:10.5px;line-height:10.5px;color:#000;white-space:nowrap;">-</div><div style="position:absolute;left:707px;top:440.91px;font-size:10.5px;line-height:10.5px;color:#000;white-space:nowrap;">-</div><div style="position:absolute;left:23.3px;top:459.91px;font-size:10.5px;line-height:10.5px;color:#000;white-space:nowrap;">2RAC1</div><div style="position:absolute;left:127px;top:459.91px;font-size:10.5px;line-height:10.5px;color:#000;white-space:nowrap;">2F</div><div style="position:absolute;left:227px;top:459.91px;font-size:10.5px;line-height:10.5px;color:#000;white-space:nowrap;">L1,L2</div><div style="position:absolute;left:327px;top:459.91px;font-size:10.5px;line-height:10.5px;color:#000;white-space:nowrap;">400</div><div style="position:absolute;left:427px;top:459.91px;font-size:10.5px;line-height:10.5px;color:#000;white-space:nowrap;">2,3</div><div style="position:absolute;left:527px;top:459.91px;font-size:10.5px;line-height:10.5px;color:#000;white-space:nowrap;">2,3</div><div style="position:absolute;left:627px;top:459.91px;font-size:10.5px;line-height:10.5px;color:#000;white-space:nowrap;">5,7</div><div style="position:absolute;left:707px;top:459.91px;font-size:10.5px;line-height:10.5px;color:#000;white-space:nowrap;">5,7</div><div style="position:absolute;left:3px;top:474px;width:763px;height:19px;background:#a6caf0;"></div><div class="a" style="left:3px;top:474px;width:766px;height:17px;border:1px dotted #000;border-right:none"></div><div style="position:absolute;left:23.3px;top:478.91px;font-size:10.5px;line-height:10.5px;color:#000;white-space:nowrap;">2RAC2</div><div style="position:absolute;left:127px;top:478.91px;font-size:10.5px;line-height:10.5px;color:#000;white-space:nowrap;">2F</div><div style="position:absolute;left:227px;top:478.91px;font-size:10.5px;line-height:10.5px;color:#000;white-space:nowrap;">L2,L3</div><div style="position:absolute;left:327px;top:478.91px;font-size:10.5px;line-height:10.5px;color:#000;white-space:nowrap;">400</div><div style="position:absolute;left:427px;top:478.91px;font-size:10.5px;line-height:10.5px;color:#000;white-space:nowrap;">2,3</div><div style="position:absolute;left:527px;top:478.91px;font-size:10.5px;line-height:10.5px;color:#000;white-space:nowrap;">2,3</div><div style="position:absolute;left:627px;top:478.91px;font-size:10.5px;line-height:10.5px;color:#000;white-space:nowrap;">-</div><div style="position:absolute;left:707px;top:478.91px;font-size:10.5px;line-height:10.5px;color:#000;white-space:nowrap;">5,7</div><div style="position:absolute;left:3px;top:523px;width:763px;height:15px;background:#f0f0f0;"></div><div style="position:absolute;left:20px;top:523px;width:592px;height:15px;background:#cdcdcd;"></div><svg class="a" style="left:0;top:0" width="768" height="601"><path d="M13.6 527.6 L9.6 530.6 L13.6 533.6" stroke="#5a5a5a" stroke-width="2" fill="none"/></svg><svg class="a" style="left:0;top:0" width="768" height="601"><path d="M755.6 527.6 L759.6 530.6 L755.6 533.6" stroke="#5a5a5a" stroke-width="2" fill="none"/></svg><div style="position:absolute;left:1px;top:540px;width:767px;height:1px;background:#828288;"></div><div style="position:absolute;left:1px;top:541px;width:767px;height:3px;background:#c5c5c8;"></div><div style="position:absolute;left:1px;top:544px;width:767px;height:1px;background:#828288;"></div><div class="a" style="left:8.30px;top:553.09px;font-size:11px;line-height:11px;white-space:nowrap;color:#000;transform:scaleX(0.9343);transform-origin:0 0">Messaggio</div><div style="position:absolute;left:3px;top:583px;width:763px;height:15px;background:#f0f0f0;"></div><div style="position:absolute;left:20px;top:583px;width:581px;height:15px;background:#cdcdcd;"></div><svg class="a" style="left:0;top:0" width="768" height="601"><path d="M13.6 587.6 L9.6 590.6 L13.6 593.6" stroke="#5a5a5a" stroke-width="2" fill="none"/></svg><svg class="a" style="left:0;top:0" width="768" height="601"><path d="M755.6 587.6 L759.6 590.6 L755.6 593.6" stroke="#5a5a5a" stroke-width="2" fill="none"/></svg><div style="position:absolute;left:1px;top:600px;width:767px;height:1px;background:#7a7e86;"></div></div>
</body></html>
